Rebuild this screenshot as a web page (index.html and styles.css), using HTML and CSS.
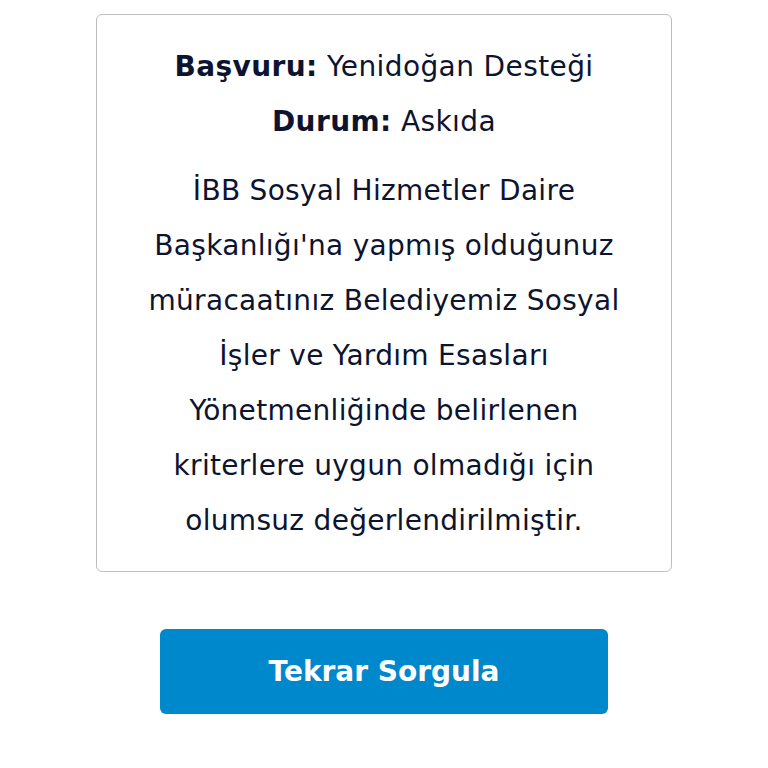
FILE: index.html
```html
<!DOCTYPE html>
<html lang="tr">
<head>
  <meta charset="UTF-8">
  <meta name="viewport" content="width=device-width, initial-scale=1">
  <title>Başvuru Sonucu</title>
  <link rel="stylesheet" href="styles.css">
</head>
<body>
  <div class="page">
    <div class="result-card">
      <p class="result-line"><strong>Başvuru:</strong> Yenidoğan Desteği</p>
      <p class="result-line"><strong>Durum:</strong> Askıda</p>
      <p class="result-message">İBB Sosyal Hizmetler Daire Başkanlığı'na yapmış olduğunuz müracaatınız Belediyemiz Sosyal İşler ve Yardım Esasları Yönetmenliğinde belirlenen kriterlere uygun olmadığı için olumsuz değerlendirilmiştir.</p>
    </div>
    <button class="retry-btn" type="button">Tekrar Sorgula</button>
  </div>
</body>
</html>
```

FILE: styles.css
```css
* {
  box-sizing: border-box;
  margin: 0;
  padding: 0;
}
body {
  font-family: 'DejaVu Sans', 'Noto Sans', sans-serif;
  background: #ffffff;
  color: #0d1430;
}
.page {
  display: flex;
  flex-direction: column;
  align-items: center;
  padding-top: 14px;
}
.result-card {
  width: 576px;
  border: 1px solid #bdbdbd;
  border-radius: 6px;
  padding: 24px 38px 23px;
  text-align: center;
  font-size: 28px;
  line-height: 55px;
}
.result-line {
  letter-spacing: 0.4px;
}
.result-line strong {
  font-weight: 700;
}
.result-message {
  margin-top: 14px;
  letter-spacing: 0.3px;
}
.retry-btn {
  margin-top: 57px;
  width: 448px;
  height: 85px;
  border: none;
  border-radius: 6px;
  background: #0088cc;
  color: #ffffff;
  font-family: inherit;
  font-size: 28px;
  font-weight: 700;
  cursor: pointer;
}
```
